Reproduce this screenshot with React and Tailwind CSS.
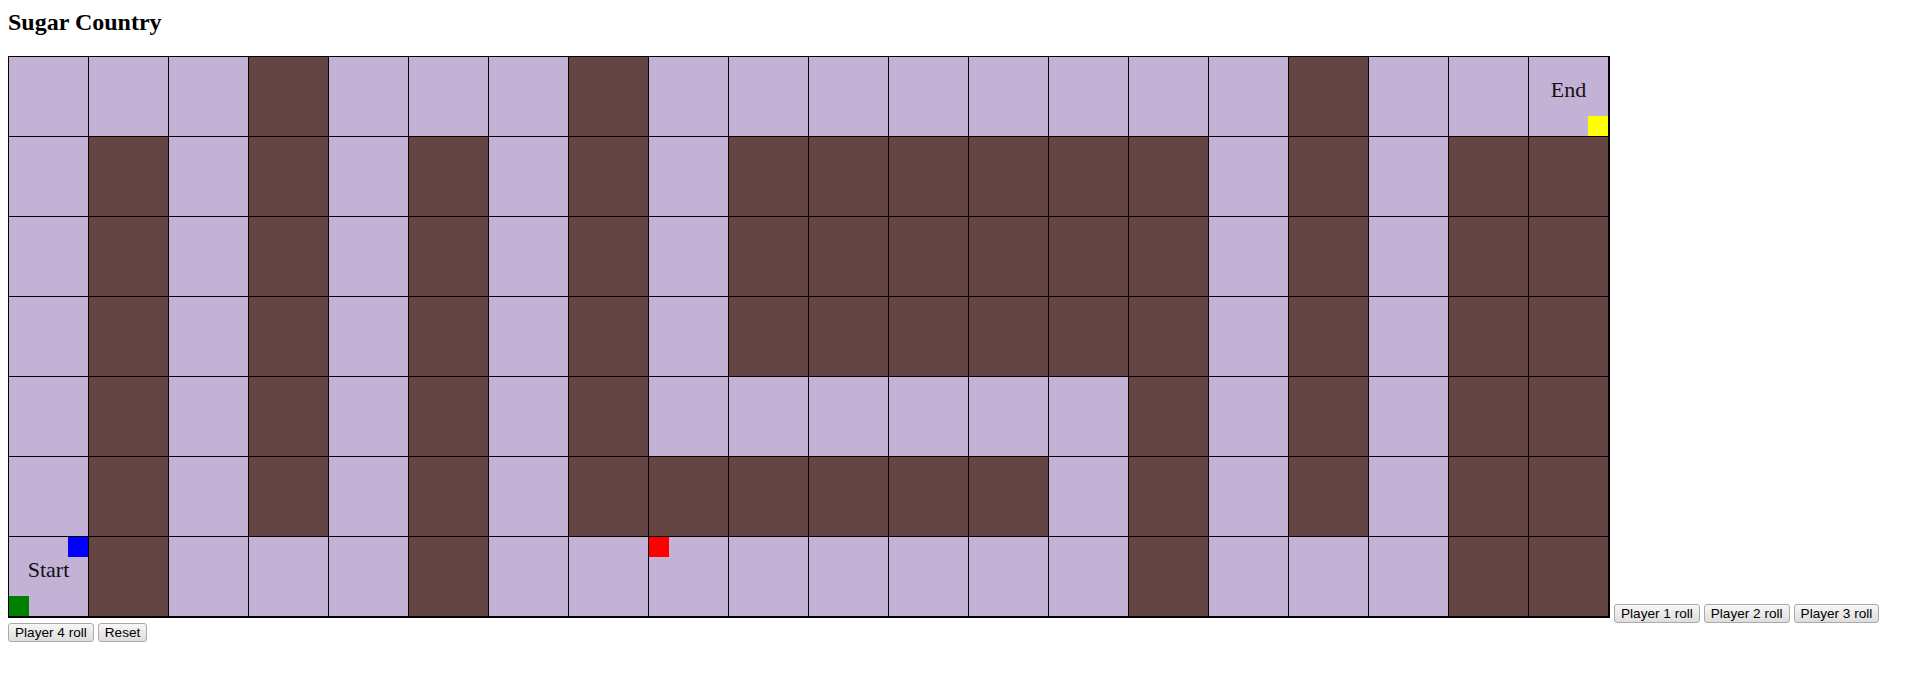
import React from 'react';

// B = chocolate wall, L = candy path
const rows = [
  'LLLBLLLBLLLLLLLLBLLL',
  'LBLBLBLBLBBBBBBLBLBB',
  'LBLBLBLBLBBBBBBLBLBB',
  'LBLBLBLBLBBBBBBLBLBB',
  'LBLBLBLBLLLLLLBLBLBB',
  'LBLBLBLBBBBBBLBLBLBB',
  'LBLLLBLLLLLLLLBLLLBB',
];

// token positions: [row, col]
const tokens = [
  { player: 1, row: 6, col: 8, cls: 'bg-[#ff0000] top-0 left-0' },
  { player: 2, row: 6, col: 0, cls: 'bg-[#0000ff] top-0 right-0' },
  { player: 3, row: 0, col: 19, cls: 'bg-[#ffff00] bottom-0 right-0' },
  { player: 4, row: 6, col: 0, cls: 'bg-[#008000] bottom-0 left-0' },
];

const Cell = ({ type, row, col }) => {
  const label = row === 6 && col === 0 ? 'Start' : row === 0 && col === 19 ? 'End' : null;
  const here = tokens.filter((t) => t.row === row && t.col === col);
  return (
    <div
      className={`relative w-20 h-20 border-r border-b border-black ${
        type === 'B' ? 'bg-[#654444]' : 'bg-[#c4b2d6]'
      }`}
    >
      {label && (
        <div className="pt-[20px] text-center text-[22px] leading-[25px] text-[#111]">{label}</div>
      )}
      {here.map((t) => (
        <div key={t.player} className={`absolute w-5 h-5 ${t.cls}`}></div>
      ))}
    </div>
  );
};

const RollButton = ({ children }) => (
  <button className="inline-block align-baseline px-[6px] py-[1px] border border-[#a9a9a9] rounded-[3px] bg-linear-to-b from-[#f7f7f7] to-[#dddddd] text-[13.6px] leading-[normal] text-black font-['Liberation_Sans',Arial,sans-serif]">
    {children}
  </button>
);

export default function App() {
  return (
    <div className="min-h-screen bg-white p-2 text-black text-[16px] leading-[normal] font-['Liberation_Serif','Times_New_Roman',serif]">
      <h2 className="text-[24px] font-bold leading-[28px] mb-5">Sugar Country</h2>

      <div>
        <div className="inline-block overflow-hidden align-baseline border border-black">
          <div className="grid grid-cols-[repeat(20,80px)]">
            {rows.map((r, ri) =>
              r.split('').map((type, ci) => <Cell key={`${ri}-${ci}`} type={type} row={ri} col={ci} />)
            )}
          </div>
        </div>{' '}
        <RollButton>Player 1 roll</RollButton>{' '}
        <RollButton>Player 2 roll</RollButton>{' '}
        <RollButton>Player 3 roll</RollButton>{' '}
        <RollButton>Player 4 roll</RollButton>{' '}
        <RollButton>Reset</RollButton>
      </div>
    </div>
  );
}
